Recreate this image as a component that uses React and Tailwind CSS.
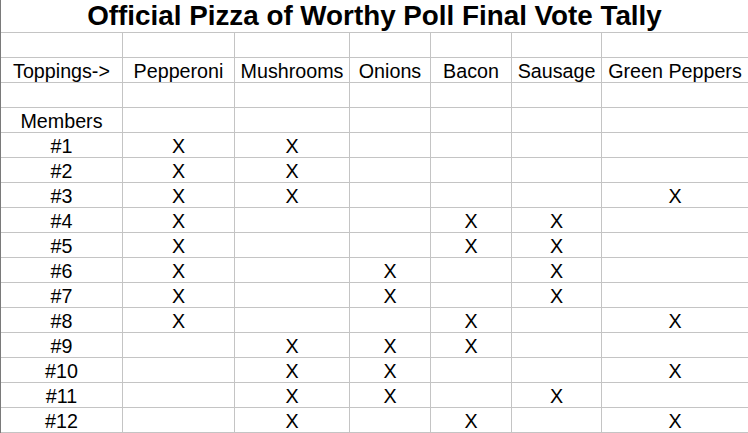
import React from "react";

const toppings = ["Pepperoni", "Mushrooms", "Onions", "Bacon", "Sausage", "Green Peppers"];

// votes per member, one flag per topping column
const votes = [
  [1, 1, 0, 0, 0, 0],
  [1, 1, 0, 0, 0, 0],
  [1, 1, 0, 0, 0, 1],
  [1, 0, 0, 1, 1, 0],
  [1, 0, 0, 1, 1, 0],
  [1, 0, 1, 0, 1, 0],
  [1, 0, 1, 0, 1, 0],
  [1, 0, 0, 1, 0, 1],
  [0, 1, 1, 1, 0, 0],
  [0, 1, 1, 0, 0, 1],
  [0, 1, 1, 0, 1, 0],
  [0, 1, 0, 1, 0, 1],
];

const Cell = ({ children, last }) => (
  <div
    className={
      last
        ? "h-[25px] pt-[2px] border-b border-[#c4c4c4] flex items-center justify-center leading-[22px] whitespace-nowrap"
        : "h-[25px] pt-[2px] border-b border-r border-[#c4c4c4] flex items-center justify-center leading-[22px] whitespace-nowrap"
    }
  >
    {children}
  </div>
);

const Row = ({ first, values = [] }) => (
  <>
    <Cell>{first}</Cell>
    {toppings.map((t, i) => (
      <Cell key={t} last={i === toppings.length - 1}>
        {values[i]}
      </Cell>
    ))}
  </>
);

export default function App() {
  return (
    <div
      className="w-[748px] h-[433px] bg-white text-black border-l border-[#7a7a7a] overflow-hidden"
      style={{ fontFamily: '"Liberation Sans", Arial, sans-serif' }}
    >
      <div className="h-[33px] border-b border-[#c4c4c4] flex items-center justify-center">
        <h1 className="font-bold text-[27.8px] leading-[32px] whitespace-nowrap">
          Official Pizza of Worthy Poll Final Vote Tally
        </h1>
      </div>
      <div className="grid grid-cols-[122px_112px_115px_81px_81px_90px_146px] text-[19.7px]">
        <Row first="" />
        <Row first="Toppings->" values={toppings} />
        <Row first="" />
        <Row first="Members" />
        {votes.map((v, i) => (
          <Row key={i} first={`#${i + 1}`} values={v.map((x) => (x ? "X" : ""))} />
        ))}
      </div>
    </div>
  );
}
